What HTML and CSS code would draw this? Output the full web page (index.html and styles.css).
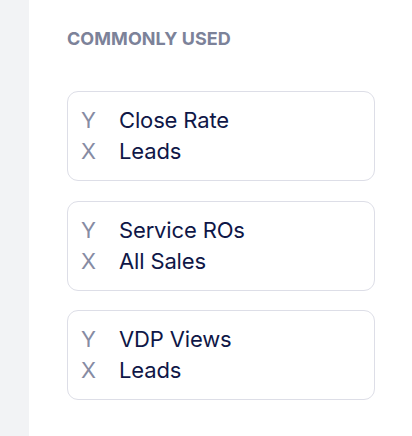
FILE: index.html
```html
<!DOCTYPE html>
<html lang="en">
<head>
<meta charset="utf-8">
<title>Commonly used</title>
<link rel="stylesheet" href="styles.css">
</head>
<body>
<div class="layout">
  <aside class="rail"></aside>
  <main class="panel">
    <h2 class="heading">COMMONLY USED</h2>
    <div class="cards">
      <div class="card">
        <div class="row"><span class="axis">Y</span><span class="metric">Close Rate</span></div>
        <div class="row"><span class="axis">X</span><span class="metric">Leads</span></div>
      </div>
      <div class="card">
        <div class="row"><span class="axis">Y</span><span class="metric">Service ROs</span></div>
        <div class="row"><span class="axis">X</span><span class="metric">All Sales</span></div>
      </div>
      <div class="card">
        <div class="row"><span class="axis">Y</span><span class="metric">VDP Views</span></div>
        <div class="row"><span class="axis">X</span><span class="metric">Leads</span></div>
      </div>
    </div>
  </main>
</div>
</body>
</html>
```
FILE: styles.css
```css
html, body {
  margin: 0;
  padding: 0;
  background: #ffffff;
}
body {
  font-family: Inter, "Noto Sans", "Liberation Sans", sans-serif;
  width: 412px;
  height: 436px;
  overflow: hidden;
}
.layout {
  display: flex;
  height: 436px;
}
.rail {
  width: 29px;
  flex: none;
  background: #f2f3f5;
}
.panel {
  flex: 1;
  padding: 28.8px 37px 0 38px;
}
.heading {
  margin: 0 0 42.2px 0;
  font-size: 18px;
  line-height: 20px;
  font-weight: 700;
  letter-spacing: 0.05px;
  color: #7c8299;
}
.cards {
  display: flex;
  flex-direction: column;
  gap: 19.6px;
}
.card {
  border: 1px solid #dddee7;
  border-radius: 11px;
  padding: 13px 13px;
}
.row {
  display: flex;
  font-size: 22px;
  line-height: 31px;
}
.axis {
  width: 38px;
  flex: none;
  color: #868ba3;
  font-weight: 400;
}
.metric {
  color: #0f1747;
  font-weight: 400;
  letter-spacing: -0.15px;
}
```
